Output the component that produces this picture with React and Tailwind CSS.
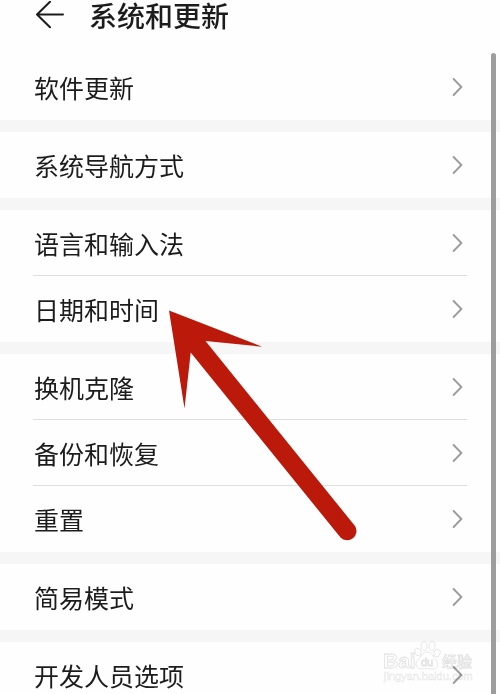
import React from 'react';

const groups = [
  ['软件更新'],
  ['系统导航方式'],
  ['语言和输入法', '日期和时间'],
  ['换机克隆', '备份和恢复', '重置'],
  ['简易模式'],
  ['开发人员选项'],
];

const Chevron = () => (
  <svg className="h-5 w-3 shrink-0" viewBox="0 0 12 20" fill="none" stroke="#9c9c9c" strokeWidth="1.9" strokeLinecap="round" strokeLinejoin="round">
    <path d="M2.6 2 10.4 10 2.6 18" />
  </svg>
);

const SettingRow = ({ label, divided }) => (
  <li className="px-[33px]">
    <button
      type="button"
      className={`flex h-[66px] w-full items-center justify-between border-b pr-1 pl-px text-left ${divided ? 'border-[#dedede]' : 'border-transparent'}`}
    >
      <span className="text-[25px] leading-8">{label}</span>
      <Chevron />
    </button>
  </li>
);

const Pointer = () => (
  <svg className="pointer-events-none absolute top-[300px] left-[150px]" width="220" height="250" viewBox="0 0 220 250">
    <path
      d="M19 10.5 112 46.7 55.5 41 205 226 A9.3 9.3 0 0 1 190.5 237.5 L40.7 52.5 34.5 108.5Z"
      fill="#bb190a"
    />
  </svg>
);

const Watermark = () => (
  <div className="pointer-events-none absolute right-6 bottom-2 mix-blend-multiply">
    <svg width="94" height="46" viewBox="0 0 94 46" fill="#ffffff" stroke="#e2e2e2" strokeWidth="0.8" fontFamily="'Liberation Sans', 'Noto Sans CJK SC', sans-serif">
      <text x="1" y="28" fontSize="21" fontWeight="700">Bai</text>
      <ellipse cx="36" cy="12" rx="3" ry="4" transform="rotate(-20 36 12)" />
      <ellipse cx="42" cy="6" rx="3" ry="4.4" />
      <ellipse cx="50" cy="6" rx="3" ry="4.4" />
      <ellipse cx="55" cy="13" rx="3" ry="4" transform="rotate(20 55 13)" />
      <path d="M45 12c5 0 6 5 9 8 4 4 1 9-3 9-4 0-7-1-12 0-5 0-7-5-3-9 3-3 4-8 9-8Z" />
      <text x="39" y="26" fontSize="11">du</text>
      <text x="60" y="27" fontSize="15" fontWeight="500">经验</text>
      <text x="2" y="40" fontSize="11" strokeWidth="0.4">jingyan.baidu.com</text>
    </svg>
  </div>
);

const App = () => {
  return (
    <div className="relative h-screen overflow-hidden bg-[#fefefe] font-['Noto_Sans_CJK_SC',sans-serif] text-[#1c1c1c]">
      <header className="flex h-[54px] items-start gap-6 pl-9">
        <button type="button" aria-label="返回" className="pt-px">
          <svg width="29" height="28" viewBox="0 0 29 28" fill="none" stroke="#1c1c1c" strokeWidth="2" strokeLinecap="round" strokeLinejoin="round">
            <path d="M14 0.8 1 13.5 14 26.2M1 13.5H27" />
          </svg>
        </button>
        <h1 className="text-[28px] leading-[30px] font-medium">系统和更新</h1>
      </header>

      <main className="space-y-3 bg-[#f6f6f6]">
        {groups.map((rows) => (
          <ul key={rows[0]} className="bg-[#fefefe]">
            {rows.map((label, i) => (
              <SettingRow key={label} label={label} divided={i < rows.length - 1} />
            ))}
          </ul>
        ))}
      </main>

      <div className="absolute top-[53px] right-1 bottom-0 w-[5px] rounded-t-full bg-[#9d9d9d]" />
      <Pointer />
      <Watermark />
    </div>
  );
};

export default App;
